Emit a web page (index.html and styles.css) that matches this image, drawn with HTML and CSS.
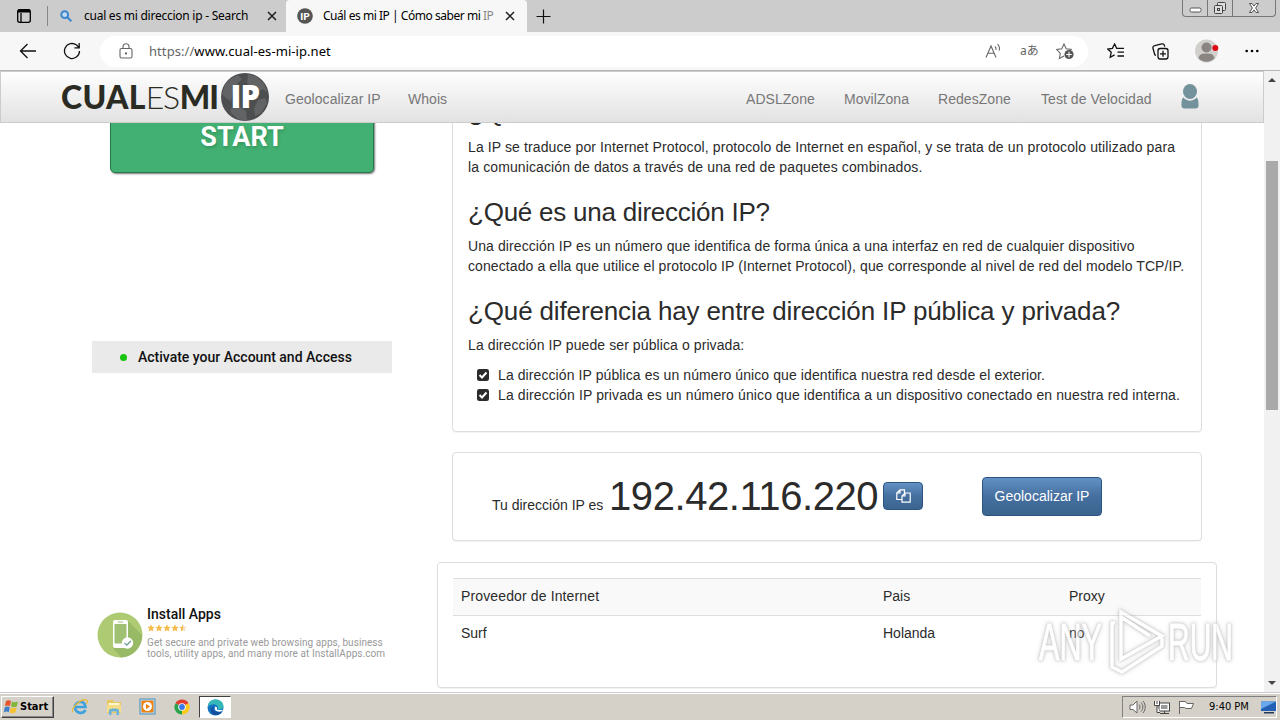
FILE: index.html
```html
<!DOCTYPE html>
<html lang="es">
<head>
  <meta charset="UTF-8" />
  <title>Cuál es mi IP | Cómo saber mi IP</title>
  <link rel="stylesheet" href="styles.css">
</head>
<body>
  <div class="tabstrip">
    <svg class="tab-actions" width="16" height="16" viewBox="0 0 16 16" fill="none" stroke="#000" stroke-width="1.3"><rect x="1.7" y="1.7" width="12.6" height="12.6" rx="2"/><path d="M2 3h12" stroke-width="3"/><path d="M5 5v9"/></svg>
    <div class="tab">
      <svg width="12" height="12" viewBox="0 0 12 12" fill="none" stroke="#3a86cf" stroke-width="2"><circle cx="4.7" cy="4.7" r="3.4" fill="#c4dcf0"/><path d="M7.3 7.3l4 4"/></svg>
      <span class="tab-title search-title">cual es mi direccion ip - Search</span>
      <svg class="tab-close" width="10" height="10" viewBox="0 0 10 10" stroke="#222" stroke-width="1.6"><path d="M1 1l8 8M9 1l-8 8"/></svg>
    </div>
    <div class="tab active">
      <svg width="16" height="16" viewBox="0 0 16 16"><circle cx="8" cy="8" r="7.8" fill="#555"/><text x="8" y="12" text-anchor="middle" class="favicon-text">IP</text></svg>
      <span class="tab-title page-title">Cuál es mi IP | Cómo saber mi <i>IP</i></span>
      <svg class="tab-close" width="10" height="10" viewBox="0 0 10 10" stroke="#222" stroke-width="1.5"><path d="M1 1l8 8M9 1l-8 8"/></svg>
    </div>
    <svg class="new-tab" width="15" height="15" viewBox="0 0 15 15" stroke="#111" stroke-width="1.2"><path d="M7.5 0.5v14M.5 7.5h14"/></svg>
    <div class="window-buttons">
      <span class="min"><svg width="13" height="6" viewBox="0 0 13 6"><rect x="1" y="1" width="11" height="4" rx="1.5" fill="#fff" stroke="#555"/></svg></span>
      <span class="max"><svg width="14" height="14" viewBox="0 0 14 14" fill="#ddd" stroke="#444"><rect x="4.5" y="1.5" width="8" height="8" rx="1"/><rect x="1.5" y="4.5" width="8" height="8" rx="1"/><rect x="4.5" y="7.5" width="2" height="2"/></svg></span>
      <span class="close"><svg width="12" height="12" viewBox="0 0 12 12"><path d="M1.5 1.5h2.5l2 2.6 2-2.6h2.5L7.6 6l2.9 4.5H8L6 7.9l-2 2.6H1.5L4.4 6z" fill="#fff" stroke="#444" stroke-width=".9"/></svg></span>
    </div>
  </div>

  <div class="toolbar">
    <svg class="back" width="18" height="16" viewBox="0 0 18 16" fill="none" stroke="#111" stroke-width="1.3"><path d="M17 8H1.5M8.5 1L1.5 8l7 7"/></svg>
    <svg class="reload" width="18" height="18" viewBox="0 0 18 18" fill="none" stroke="#111" stroke-width="1.3"><path d="M16.5 9A7.5 7.5 0 1 1 13.6 3.1L16 5.5M16.2 1v4.8h-4.8"/></svg>
    <div class="address">
      <svg width="14" height="16" viewBox="0 0 14 16" fill="none" stroke="#666" stroke-width="1.1"><rect x="1" y="5.5" width="12" height="9.5" rx="1.5"/><path d="M4 5.5V3.8a3 3 0 0 1 6 0v1.7"/><circle cx="7" cy="10.5" r=".6" fill="#666"/></svg>
      <span class="url"><span class="scheme">https://</span>www.cual-es-mi-ip.net</span>
      <svg class="read" width="17" height="16" viewBox="0 0 17 16" fill="none" stroke="#666" stroke-width="1.1"><path d="M1 14.5L6 3l5 11.5M2.8 10.3h6.4M10 3.500c1 1 1.300 2.200 1 3.500M12.500 1.200c1.800 1.800 2.400 4 1.700 6.500"/></svg>
      <span class="translate">aあ</span>
      <svg class="star" width="19" height="18" viewBox="0 0 19 18" fill="none" stroke="#666" stroke-width="1.1"><path d="M8 14l-4.600 2.500.9-5.200L.8 7.500l5-.7L8 2l2.200 4.800 5 .7L13 9.500"/><circle cx="13" cy="12.500" r="4.600" fill="#555" stroke="none"/><path d="M13 9.700v5.600M10.200 12.500h5.600" stroke="#fff"/></svg>
    </div>
    <svg class="favorites" width="18" height="16" viewBox="0 0 18 16" fill="none" stroke="#111" stroke-width="1.3"><path d="M17 5.300H9.700L7.600 1 5.400 5.300l-4.600.7 3.400 3.300-1 5 4.400-2.400M10.500 9.200H17M10.500 13H17"/></svg>
    <svg class="collections" width="17" height="17" viewBox="0 0 17 17" fill="none" stroke="#111" stroke-width="1.3"><path d="M4 12.300L2.800 11.800 1 5.500C.6 4 1.400 3 2.800 2.700l7-1.800c1.200-.3 2.200.2 2.500 1.300l.4 1.500"/><rect x="6" y="5.500" width="10" height="10.500" rx="2.200"/><path d="M11 7.800v6M8 10.800h6"/></svg>
    <svg class="avatar" width="24" height="24" viewBox="0 0 24 24"><circle cx="11.500" cy="12" r="11.500" fill="#d2d0cc"/><circle cx="11.500" cy="8.500" r="5" fill="#8a8583"/><path d="M3.500 19c1-4 4-4.500 8-4.500s7 .5 8 4.500c-4 5-12 5-16 0z" fill="#8a8583"/><circle cx="20.300" cy="9" r="3" fill="#df0914"/></svg>
    <svg class="dots" width="14" height="4" viewBox="0 0 14 4"><circle cx="1.700" cy="2" r="1.300"/><circle cx="7" cy="2" r="1.300"/><circle cx="12.300" cy="2" r="1.300"/></svg>
  </div>

  <div class="viewport">
    <div class="page">
      <nav class="navbar">
        <a class="brand">
          <span class="brand-text"><b>CUAL</b>ES<b class="mi">MI</b></span>
          <svg width="50" height="50" viewBox="0 0 50 50"><circle cx="25" cy="25" r="24" fill="#4d4e50"/><path d="M5 13l5-6 8-4 4 4-5 5 1 5-5 4-2 8-5-3-4-4zM28 2l9 3 7 7 4 9-5-4-4 2-7-3-5-5zM10 37l8-3 8 5 1 10-9-2-7-6zM38 28l7-2 2 5-6 10-6 3-1-7z" fill="#626365"/><text x="10.500" y="36" class="brand-ip">I</text><text x="20.500" y="36" class="brand-ip">P</text></svg>
        </a>
        <a class="nav-geo">Geolocalizar IP</a>
        <a class="nav-whois">Whois</a>
        <a class="nav-adsl">ADSLZone</a>
        <a class="nav-movil">MovilZona</a>
        <a class="nav-redes">RedesZone</a>
        <a class="nav-test">Test de Velocidad</a>
        <svg class="nav-user" width="18" height="26" viewBox="0 0 18 26" fill="#73929b"><ellipse cx="9" cy="7.500" rx="7" ry="7.500"/><path d="M2.500 13.500c3 4.200 10 4.200 13 0 2 1 2 5 2 8 0 2-1 3-3 3h-11c-2 0-3-1-3-3 0-3 0-7 2-8z"/></svg>
      </nav>

      <main class="content">
        <aside class="ads">
          <div class="start-button">START</div>
          <div class="activate"><span class="dot"></span>Activate your Account and Access</div>
          <div class="install">
            <svg width="46" height="46" viewBox="0 0 46 46"><circle cx="23" cy="23" r="22.500" fill="#aecb74"/><path d="M31 9l14 14c0 12-9 22-21 22.500L16 36z" fill="#98b966"/><rect x="16" y="8" width="15" height="28" rx="2" fill="#fff"/><rect x="17.500" y="12" width="12" height="19.500" fill="#a0c174"/><path d="M21 10h5" stroke="#a0c174"/><circle cx="30.500" cy="31" r="5.700" fill="#fff"/><path d="M27.500 31l2.300 2.200 4-4.200" fill="none" stroke="#6c9c94" stroke-width="1.300"/></svg>
            <div class="install-text">
              <strong>Install Apps</strong>
              <svg width="40" height="8" viewBox="0 0 40 8" fill="#f5bd4f"><path id="s" d="M4 .3l1.100 2.400 2.600.3-1.900 1.800.5 2.700L4 6.200 1.700 7.500l.5-2.700L.3 3l2.600-.3z"/><use href="#s" x="8"/><use href="#s" x="16"/><use href="#s" x="24"/><path d="M36 .3v5.900l-2.300 1.300.5-2.700L32.300 3l2.600-.3z"/><path d="M36 .3l1.100 2.400 2.600.3-1.900 1.800.5 2.700L36 6.200z" fill="#f3dcc0"/></svg>
              <p>Get secure and private web browsing apps, business<br>tools, utility apps, and many more at InstallApps.com</p>
            </div>
          </div>
        </aside>

        <section class="info">
          <div class="panel about">
            <h3>¿Qué es IP?</h3>
            <p>La IP se traduce por Internet Protocol, protocolo de Internet en español, y se trata de un protocolo utilizado para<br>la comunicación de datos a través de una red de paquetes combinados.</p>
            <h3 class="h-what">¿Qué es una dirección IP?</h3>
            <p class="what">Una dirección IP es un número que identifica de forma única a una interfaz en red de cualquier dispositivo<br>conectado a ella que utilice el protocolo IP (Internet Protocol), que corresponde al nivel de red del modelo TCP/IP.</p>
            <h3 class="h-diff">¿Qué diferencia hay entre dirección IP pública y privada?</h3>
            <p class="diff">La dirección IP puede ser pública o privada:</p>
            <ul>
              <li class="public"><svg width="12" height="12" viewBox="0 0 12 12"><rect width="12" height="12" rx="2.300" fill="#2b2b2b"/><path d="M2.500 6l2.500 2.500 4.500-5" fill="none" stroke="#fff" stroke-width="2"/></svg>La dirección IP pública es un número único que identifica nuestra red desde el exterior.</li>
              <li><svg width="12" height="12" viewBox="0 0 12 12"><rect width="12" height="12" rx="2.300" fill="#2b2b2b"/><path d="M2.500 6l2.500 2.500 4.500-5" fill="none" stroke="#fff" stroke-width="2"/></svg>La dirección IP privada es un número único que identifica a un dispositivo conectado en nuestra red interna.</li>
            </ul>
          </div>

          <div class="panel ip-panel">
            <span class="ip-label">Tu dirección IP es</span>
            <span class="ip">192.42.116.220</span>
            <button class="btn copy"><svg width="15" height="14" viewBox="0 0 15 14" fill="none" stroke="#fff" stroke-width="1.200"><path d="M6 10.500H.8V4L4 .800h4.500V4M4 .800V4H.800M6 13.200V7l3-3h5.200v9.200zM9 4v3H6"/></svg></button>
            <button class="btn geo">Geolocalizar IP</button>
          </div>

          <div class="panel data-panel">
            <table>
              <tr><th>Proveedor de Internet</th><th>Pais</th><th>Proxy</th></tr>
              <tr><td>Surf</td><td>Holanda</td><td>no</td></tr>
            </table>
          </div>
        </section>
      </main>
    </div>
    <div class="scrollbar"><i class="up"></i><div class="thumb"></div><i class="down"></i></div>
  </div>

  <div class="taskbar">
    <div class="start-menu">
      <svg width="17" height="16" viewBox="0 0 17 16"><path d="M3 2c2-1 3.500-1 5 0L7 7.200c-1.500-1-3-1-5 0z" fill="#e8542d"/><path d="M9 2.500c2 1 3.500 1 6 0l-1.200 5c-2 1-4 1-5.800 0z" fill="#84b53c"/><path d="M1.800 8.200c2-1 3.500-1 5 0l-1 5c-1.500-1-3-1-5 0z" fill="#3f7fc9"/><path d="M7.800 8.500c2 1 3.500 1 5.800 0l-1.200 5c-2 1-4 1-5.700 0z" fill="#f6c12f"/></svg>
      Start
    </div>
    <div class="quick">
      <svg width="18" height="18" viewBox="0 0 18 18" fill="none"><path d="M14.500 12c-3 5-10.500 3-10.500-3s9.500-7.500 10.500 0H5" stroke="#3fa2df" stroke-width="2.600"/><path d="M2 14C-1 12 9 0 15.500 2c2 .8.500 3-.5 4" stroke="#e9b93b" stroke-width="1.300"/></svg>
      <svg width="18" height="18" viewBox="0 0 18 18"><path d="M2 2h6l1 2h7v11H2z" fill="#e9c760"/><path d="M3.500 5h11v4h-11z" fill="#fff6cc"/><path d="M2 7h14v7H2z" fill="#f5dc87"/><path d="M4 17v-5c0-2 10-2 10 0v5h-2.500v-3.500h-5V17z" fill="#6bb2d9"/></svg>
      <svg width="18" height="18" viewBox="0 0 18 18"><rect x="1" y="1" width="15" height="15" fill="#b9dcf0" stroke="#4d8fbd"/><rect x="2.500" y="2.500" width="12" height="12" rx="1" fill="#f08214"/><circle cx="8.500" cy="8.500" r="4.500" fill="#fff"/><path d="M7 5.700l4 2.800-4 2.800z" fill="#f08214"/></svg>
      <svg width="18" height="18" viewBox="0 0 18 18"><path d="M9 9L2.500 5.200A7.500 7.500 0 0 1 15.500 5.200z" fill="#e33b2e"/><path d="M9 9l6.500-3.800A7.500 7.500 0 0 1 9 16.500z" fill="#fbc916"/><path d="M9 9v7.500A7.500 7.500 0 0 1 2.500 5.200z" fill="#2ba14b"/><circle cx="9" cy="9" r="3.800" fill="#fff"/><circle cx="9" cy="9" r="2.900" fill="#3b78e7"/></svg>
    </div>
    <div class="task-edge"><svg width="17" height="17" viewBox="0 0 17 17"><circle cx="8.500" cy="8.500" r="8" fill="#1473c2"/><path d="M1 6.500C3-2 16-1 16.500 7c0 3-3 4-6 3.500 2-3-2-6-5-5C3 5.500 1.500 6.500 1 8z" fill="#35b9b8"/><path d="M7 8c-2 3 1 6.500 8 4.500-4 6-12 4-11-2 .4-2 2-3 3-2.500z" fill="#134f9b"/><path d="M8.500 7.500c3 1 .5 3 2.500 3.500h5.500l-2.500 1.500c-4 .7-8-1.500-5.500-5z" fill="#fff"/></svg></div>
    <div class="tray">
      <svg class="sound" width="17" height="14" viewBox="0 0 17 14" fill="none" stroke="#666"><path d="M1 5h3l4-4v12L4 9.500H1z" fill="#fff"/><path d="M10 4.500c1.300 1.500 1.300 3.500 0 5M12 2.500c2.500 3 2.500 6 0 9M14 1c3 4 3 8 0 12"/></svg>
      <svg class="net" width="16" height="15" viewBox="0 0 16 15" fill="#fff" stroke="#444"><rect x="5" y="3" width="10.500" height="8" fill="#fff"/><rect x="7" y="5" width="6.500" height="4" fill="#999" stroke="none"/><path d="M6 13.500h9M10.500 11v2"/><path d="M.5 1v4.500h5V1M3 1v3M3 5.500v7h3" fill="#fff"/></svg>
      <svg class="flag" width="17" height="14" viewBox="0 0 17 14" fill="#fff" stroke="#666"><path d="M1.500 14V1M1.500 1.500h6l1.500 2h6.500l-2 5H8l-1.500-1h-5"/></svg>
      <span class="clock">9:40 PM</span>
      <svg width="15" height="14" viewBox="0 0 15 14"><path d="M0 1.500h15v9.500H0z" fill="#2360b4"/><path d="M0 1.500h15L0 9z" fill="#68a8ec"/><path d="M3 12h10v1.500H3z" fill="#243a5c"/></svg>
    </div>
  </div>

  <svg class="watermark" width="210" height="76" viewBox="0 0 210 76">
    <text x="9" y="57" textLength="63" lengthAdjust="spacingAndGlyphs">ANY</text>
    <path d="M82 53V20h3M91 9l41 24-41 23z M91 14l29 19M82 50v14l10 5 40-26v-8" fill="none" stroke="#fff" stroke-width="3.500"/>
    <text x="138" y="57" textLength="65" lengthAdjust="spacingAndGlyphs">RUN</text>
  </svg>
</body>
</html>
```
FILE: styles.css
```css
* {
  box-sizing: border-box;
}
body {
  margin: 0;
  width: 1280px;
  height: 720px;
  overflow: hidden;
  display: flex;
  flex-direction: column;
  position: relative;
  background: #fff;
  color: #2b2b2b;
  font: 14px/20px "Liberation Sans", Arial, sans-serif;
}
svg {
  flex: none;
  display: block;
}

/* browser window */
.tabstrip {
  height: 32px;
  flex: none;
  display: flex;
  align-items: center;
  background: #ccc;
  color: #000;
  font: 12px/16px "Noto Sans", sans-serif;
}
.tab-actions {
  margin-left: 16px;
}
.tab {
  display: flex;
  align-items: center;
  height: 32px;
  width: 239px;
  margin-left: 15px;
  padding-left: 13px;
  position: relative;
}
.tab:not(.active)::before {
  content: "";
  position: absolute;
  left: 0;
  top: 6px;
  height: 20px;
  border-left: 1px solid #888;
}
.tab.active {
  background: #f7f7f7;
  width: 241px;
  margin-left: 0;
  padding-left: 11px;
  border-radius: 4px 4px 0 0;
}
.tab-title {
  white-space: nowrap;
  overflow: hidden;
}
.search-title {
  margin-left: 12px;
  width: 183px;
  letter-spacing: -0.25px;
}
.page-title {
  margin-left: 10px;
  width: 182px;
  letter-spacing: -0.46px;
}
.page-title i {
  font-style: normal;
  color: #888;
}
.favicon-text {
  font: 900 10px Lato, sans-serif;
  fill: #fff;
}
.new-tab {
  margin-left: 9px;
}
.window-buttons {
  display: flex;
  align-self: flex-start;
  height: 17px;
  margin: 0 4px 0 auto;
  border: 1px solid #777;
  border-top: 0;
  border-radius: 0 0 4px 4px;
}
.window-buttons span {
  display: flex;
  align-items: center;
  justify-content: center;
  width: 25px;
  border-right: 1px solid #777;
}
.window-buttons .min {
  padding-top: 4px;
}
.window-buttons .close {
  width: 42px;
  border: 0;
}
.toolbar {
  height: 39px;
  flex: none;
  display: flex;
  align-items: center;
  background: #f7f7f7;
  border-bottom: 1px solid #b5b5b5;
}
.back {
  margin-left: 19px;
}
.reload {
  margin-left: 26px;
}
.address {
  display: flex;
  align-items: center;
  width: 988px;
  height: 31px;
  margin-left: 19px;
  padding-left: 19px;
  background: #fff;
  border-radius: 16px;
}
.url {
  margin-left: 16px;
  width: 824px;
  color: #000;
  font: 13px/18px "Noto Sans", sans-serif;
  letter-spacing: 0.07px;
}
.scheme {
  color: #666;
}
.read {
  margin-left: 12px;
}
.translate {
  margin-left: 18px;
  width: 20px;
  color: #666;
  font: 12px/16px "Noto Sans", "Noto Sans CJK JP", sans-serif;
  white-space: nowrap;
}
.star {
  margin-left: 16px;
}
.favorites {
  margin-left: 19px;
}
.collections {
  margin-left: 27px;
}
.avatar {
  margin-left: 26px;
}
.dots {
  margin-left: 26px;
}

.viewport {
  height: 621px;
  flex: none;
  display: flex;
}
.page {
  width: 1264px;
  overflow: hidden;
}

/* site header */
.navbar {
  position: relative;
  height: 52px;
  display: flex;
  align-items: center;
  background: linear-gradient(#fefefe, #e2e2e2);
  border: 1px solid #ccc;
  color: #777;
  white-space: nowrap;
  letter-spacing: 0.05px;
}
.navbar > a {
  padding-top: 4px;
}
.navbar .brand {
  display: flex;
  align-items: center;
  width: 209px;
  margin-left: 60px;
  padding: 0;
}
.brand-text {
  width: 159px;
  color: #2a2b23;
  font: 300 32px/50px Lato, sans-serif;
  letter-spacing: -1.3px;
}
.brand-text b {
  font-weight: 900;
  letter-spacing: 0.3px;
}
.brand-text .mi {
  margin-left: 1px;
  letter-spacing: -1px;
}
.brand-ip {
  font: 800 31px "Open Sans", sans-serif;
  letter-spacing: 0;
  fill: #fff;
}
.nav-geo {
  margin-left: 15px;
  width: 123px;
}
.nav-whois {
  width: 338px;
}
.nav-adsl {
  width: 98px;
}
.nav-movil {
  width: 94px;
}
.nav-redes {
  width: 103px;
}
.nav-test {
  width: 140px;
}
.nav-user {
  margin-top: -1px;
}

.content {
  display: flex;
  height: 569px;
  overflow: hidden;
  padding-left: 92px;
}
.ads {
  width: 300px;
  flex: none;
  font-family: Roboto, sans-serif;
}
.start-button {
  width: 264px;
  height: 71px;
  margin: -21px 0 0 18px;
  background: #42b072;
  border: 1px solid #27784a;
  border-radius: 5px;
  box-shadow: 1px 1px 2px #777;
  color: #fff;
  text-align: center;
  font-size: 27px;
  font-weight: 700;
  line-height: 69px;
  text-shadow: 1px 2px 3px #36965f;
}
.activate {
  display: flex;
  align-items: center;
  height: 32px;
  margin-top: 168px;
  padding-left: 28px;
  background: #eaeaea;
  color: #111;
  font-size: 14px;
  font-weight: 500;
}
.dot {
  width: 7px;
  height: 7px;
  margin-right: 11px;
  border-radius: 50%;
  background: #17c40f;
}
.install {
  display: flex;
  align-items: flex-start;
  margin-top: 231px;
  padding-left: 5px;
}
.install > svg {
  margin-top: 8px;
}
.install-text {
  margin-left: 4px;
  white-space: nowrap;
}
.install strong {
  display: block;
  color: #111;
  font-size: 14px;
  font-weight: 500;
}
.install p {
  margin: 5px 0 0;
  color: #999;
  font-size: 10px;
  line-height: 11px;
  letter-spacing: 0.07px;
}

.info {
  width: 750px;
  margin-left: 60px;
}
.panel {
  border: 1px solid #ddd;
  border-radius: 4px;
  box-shadow: 0 1px 1px rgba(0,0,0,0.05);
  background: #fff;
  white-space: nowrap;
}
.about {
  height: 351px;
  margin-top: -42px;
  padding: 15px;
}
.about h3 {
  margin: 21px 0 10px;
  font-size: 26px;
  font-weight: 400;
  line-height: 28.6px;
}
.about h3:first-child {
  margin-top: 1px;
}
.about .h-what {
  letter-spacing: -0.24px;
}
.about .h-diff {
  margin-bottom: 9px;
  letter-spacing: -0.14px;
}
.about p {
  margin: 0;
  letter-spacing: 0.114px;
}
.about .what,
.about .diff {
  letter-spacing: 0.095px;
}
.about ul {
  list-style: none;
  margin: 10px 0;
  padding-left: 9px;
}
.about li {
  display: flex;
  align-items: center;
  letter-spacing: 0.12px;
}
.about .public {
  letter-spacing: 0.09px;
}
.about li svg {
  margin-right: 9px;
}
.ip-panel {
  display: flex;
  align-items: center;
  height: 89px;
  margin-top: 20px;
  padding-left: 39px;
}
.ip-label {
  width: 117px;
  padding-top: 17px;
}
.ip {
  width: 274px;
  margin-top: -2px;
  font-size: 40px;
  line-height: 44px;
  letter-spacing: -0.42px;
}
.btn {
  display: flex;
  align-items: center;
  justify-content: center;
  padding: 0;
  border: 1px solid #2b5580;
  border-radius: 4px;
  background: linear-gradient(#6391c4, #456f9f 50%, #3b658f);
  color: #fff;
  font: 14px "Liberation Sans", Arial, sans-serif;
}
.copy {
  width: 40px;
  height: 28px;
  margin-top: -2px;
}
.geo {
  width: 120px;
  height: 39px;
  margin-left: 59px;
  padding-bottom: 2px;
}
.data-panel {
  width: 780px;
  height: 126px;
  margin: 21px 0 0 -15px;
  padding: 15px;
}
table {
  width: 748px;
  table-layout: fixed;
  border-collapse: collapse;
}
th, td {
  padding: 7px 8px 9px;
  border-top: 1px solid #ddd;
  text-align: left;
  font-weight: 400;
  line-height: 20px;
}
th {
  background: #f9f9f9;
}
th:first-child {
  width: 422px;
  letter-spacing: 0.13px;
}
th:nth-child(2) {
  width: 186px;
}

.scrollbar {
  width: 16px;
  display: flex;
  flex-direction: column;
  align-items: center;
  background: #f1f1f1;
}
.scrollbar i {
  border: 4px solid transparent;
}
.scrollbar .up {
  margin-top: 3px;
  border-bottom-color: #444;
}
.thumb {
  width: 12px;
  height: 249px;
  margin-top: 79px;
  background: #a9a9a9;
}
.scrollbar .down {
  margin: auto 0 3px;
  border-top-color: #444;
}

/* desktop taskbar */
.taskbar {
  height: 28px;
  flex: none;
  display: flex;
  align-items: center;
  background: #d5d1c8;
  border-top: 1px solid #ccc;
  box-shadow: inset 0 1px #fff;
  color: #000;
  font: 11px/14px "DejaVu Sans Condensed", sans-serif;
}
.start-menu {
  display: flex;
  align-items: center;
  width: 53px;
  height: 22px;
  margin: 1px 0 0 1px;
  padding-left: 1px;
  border: 1px solid;
  border-color: #fff #404040 #404040 #fff;
  box-shadow: inset -1px -1px #888;
  font-weight: 700;
}
.quick {
  display: flex;
  gap: 16px;
  margin: 1px 0 0 17px;
}
.task-edge {
  width: 32px;
  height: 22px;
  margin: 1px 0 0 8px;
  padding: 2px 0 0 7px;
  background: #fff;
  border: 1px solid;
  border-color: #404040 #fff #fff #404040;
}
.tray {
  display: flex;
  align-items: center;
  width: 155px;
  height: 22px;
  margin: 1px 3px 0 auto;
  padding-left: 6px;
  border: 1px solid;
  border-color: #808080 #fff #fff #808080;
}
.net {
  margin-left: 8px;
}
.flag {
  margin-left: 8px;
}
.clock {
  width: 52px;
  margin-left: 14px;
  white-space: nowrap;
}

.watermark {
  position: absolute;
  left: 1030px;
  top: 603px;
  opacity: 0.6;
  filter: drop-shadow(0 0 1px #999) drop-shadow(0 0 2px #bbb);
}
.watermark text {
  font: 400 51px "Liberation Sans", Arial, sans-serif;
  fill: #fff;
  stroke: #fff;
}
```
